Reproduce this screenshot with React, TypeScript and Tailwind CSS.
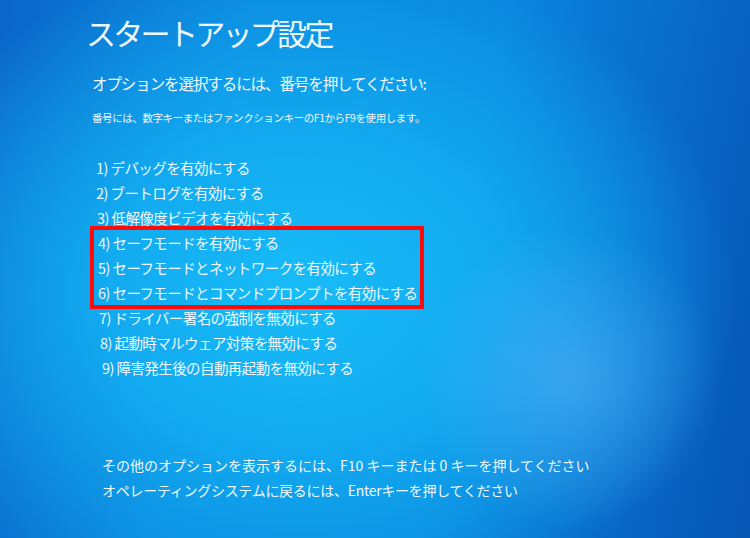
const items = [
  { label: "1) デバッグを有効にする", pad: "pl-[0px]" },
  { label: "2) ブートログを有効にする", pad: "pl-[0px]" },
  { label: "3) 低解像度ビデオを有効にする", pad: "pl-[1px]" },
];

const safeItems = [
  "4) セーフモードを有効にする",
  "5) セーフモードとネットワークを有効にする",
  "6) セーフモードとコマンドプロンプトを有効にする",
];

const moreItems = [
  { label: "7) ドライバー署名の強制を無効にする", pad: "pl-[3px]" },
  { label: "8) 起動時マルウェア対策を無効にする", pad: "pl-[4px]" },
  { label: "9) 障害発生後の自動再起動を無効にする", pad: "pl-[6px]" },
];

export default function App() {
  return (
    <div
      className="w-[750px] h-[538px] overflow-hidden flex flex-col text-[#eef8ff] bg-[radial-gradient(ellipse_20%_28%_at_76%_70%,rgba(85,175,245,0.6)_0%,rgba(85,175,245,0)_100%),radial-gradient(ellipse_58%_64%_at_40%_54%,#18bcf8_0%,#12aaf0_45%,rgba(12,130,225,0)_100%),linear-gradient(100deg,#0a66c8_0%,#0a86de_30%,#0a86de_60%,#0866c6_85%,#0656b4_100%)]"
      style={{ fontFamily: '"Noto Sans CJK JP", "Noto Sans", sans-serif' }}
    >
      <h1 className="mt-[12px] ml-[86px] h-[40px] text-[30px] leading-[40px] tracking-[-0.09em] font-normal whitespace-nowrap">
        スタートアップ設定
      </h1>
      <p className="mt-[19px] ml-[92px] text-[15.5px] leading-[24px] tracking-[-0.07em] whitespace-nowrap">
        オプションを選択するには、番号を押してください:
      </p>
      <p className="mt-[15px] ml-[92px] text-[10.5px] leading-[16px] tracking-[-0.04em] whitespace-nowrap">
        番号には、数字キーまたはファンクションキーのF1からF9を使用します。
      </p>

      <div className="mt-[29px] ml-[96px] flex flex-col text-[14.5px] leading-[25px] tracking-[-0.04em] whitespace-nowrap">
        {items.map((it) => (
          <div key={it.label} className={it.pad}>
            {it.label}
          </div>
        ))}
        <div className="-my-[4px] -ml-[6px] w-[334px] border-4 border-[#ff0a0a] pl-[4px]">
          {safeItems.map((s) => (
            <div key={s}>{s}</div>
          ))}
        </div>
        {moreItems.map((it) => (
          <div key={it.label} className={it.pad}>
            {it.label}
          </div>
        ))}
      </div>

      <div className="mt-[73px] ml-[102px] flex flex-col text-[14px] leading-[25px] whitespace-nowrap">
        <div>その他のオプションを表示するには、F10 キーまたは 0 キーを押してください</div>
        <div className="tracking-[-0.02em]">オペレーティングシステムに戻るには、Enterキーを押してください</div>
      </div>
    </div>
  );
}
